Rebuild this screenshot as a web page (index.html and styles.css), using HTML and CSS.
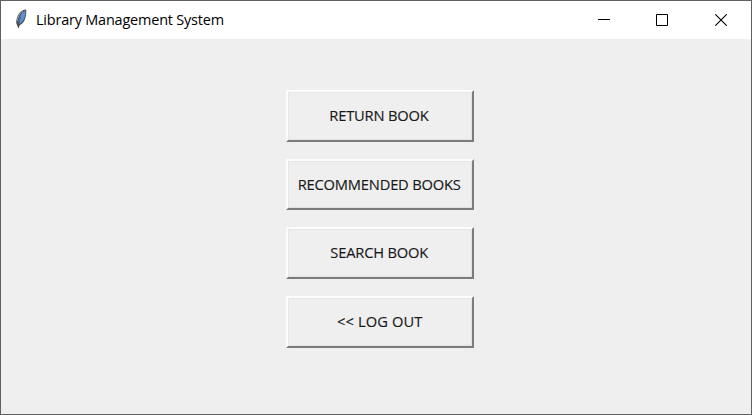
FILE: index.html
```html
<!DOCTYPE html>
<html lang="en">
<head>
<meta charset="utf-8">
<title>Library Management System</title>
<link rel="stylesheet" href="styles.css">
</head>
<body>
<div class="window">
  <header class="titlebar">
    <svg class="feather" width="12" height="20" viewBox="0 0 12 20">
      <path d="M11 .5C7.5.5 3.8 3.5 2.2 8 1 11.5.8 14 2 16L3.4 19.5 4.7 16.2C8.2 14.5 10 11.5 10.8 7.5 11.3 4.5 11.6 2 11 .5Z" fill="#505258"/>
      <path d="M10.3 1.5C7 3.5 4.4 7 3.3 12.5L4.3 15C7.9 12.8 9.6 9.5 10.3 5.5Z" fill="#5b90d4"/>
      <path d="M8 1.8C4.8 4.2 2.6 8 2.2 12" fill="none" stroke="#96989e" stroke-width="1"/>
      <path d="M5.5 8C4.5 11 3.8 14 3.4 19" fill="none" stroke="#283449" stroke-width=".6"/>
    </svg>
    <h1 class="title">Library Management System</h1>
    <div class="controls">
      <svg width="12" height="12" viewBox="0 0 12 12" shape-rendering="crispEdges"><path d="M0 5h12v1H0z"/></svg>
      <svg width="12" height="12" viewBox="0 0 12 12"><path d="M.5.5h11v11H.5z" fill="none" stroke="#000"/></svg>
      <svg class="close" width="12" height="12" viewBox="0 0 12 12"><path d="M.3.3l11.4 11.4M11.7.3L.3 11.7" stroke="#000" stroke-width="1.1"/></svg>
    </div>
  </header>
  <main class="menu">
    <button class="item"><span class="label">RETURN BOOK</span></button>
    <button class="item"><span class="label">RECOMMENDED BOOKS</span></button>
    <button class="item"><span class="label">SEARCH BOOK</span></button>
    <button class="item"><span class="label logout">&lt;&lt; LOG OUT</span></button>
  </main>
</div>
</body>
</html>
```
FILE: styles.css
```css
* { box-sizing: border-box; }
body { margin: 0; font-family: "Open Sans", "Noto Sans", sans-serif; color: #000; }
.window { width: 752px; height: 415px; border: 1px solid #606060; background: #efefef; overflow: hidden; }
.titlebar { height: 38px; display: flex; align-items: center; padding: 0 24px 0 14px; background: #fff; }
.feather { flex: none; margin-top: -2px; }
.title { margin: -2px 0 0 9px; font-size: 15.2px; font-weight: 400; line-height: 20px; letter-spacing: -0.2px; white-space: nowrap; transform: scaleX(0.951); transform-origin: left; }
.controls { margin-left: auto; display: flex; gap: 46px; }
.controls svg { display: block; }
.controls .close { margin-left: 1px; }
.menu { display: flex; flex-direction: column; gap: 17px; width: 188px; margin: 51px 0 0 285px; }
.item { display: flex; align-items: center; justify-content: center; height: 51.7px; padding: 0; border: 2px solid; border-color: #fcfcfc #7c7c7c #7c7c7c #fcfcfc; background: #efefef; box-shadow: inset 1px 1px #e6e6e6, inset -1px -1px #e2e2e2; font: 400 15.3px/20px "Open Sans", "Noto Sans", sans-serif; color: #181818; }
.label { margin-top: -2px; letter-spacing: -0.2px; white-space: nowrap; transform: translateX(-0.7px) scaleX(0.96); -webkit-text-stroke: 0.15px #181818; }
.logout { letter-spacing: 0.1px; }
```
